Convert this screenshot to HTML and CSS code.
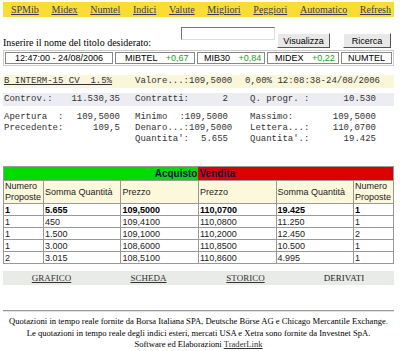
FILE: index.html
```html
<!DOCTYPE html>
<html lang="it">
<head>
    <meta charset="UTF-8">
    <title>Book - B INTERM-15 CV 1.5%</title>
    <link rel="stylesheet" href="styles.css">
</head>
<body>
    <div class="pagina">
        <div class="menu">
            <a href="#">SPMib</a>
            <a href="#">Midex</a>
            <a href="#">Numtel</a>
            <a href="#">Indici</a>
            <a href="#">Valute</a>
            <a href="#">Migliori</a>
            <a href="#">Peggiori</a>
            <a href="#">Automatico</a>
            <a href="#">Refresh</a>
        </div>

        <form class="cerca" onsubmit="return false">
            <span class="etichetta">Inserire il nome del titolo desiderato:</span>
            <input type="text" class="campo">
            <button class="bottone visualizza">Visualizza</button>
            <button class="bottone ricerca">Ricerca</button>
        </form>

        <div class="indici">
            <div class="cella ora">12:47:00 - 24/08/2006</div>
            <div class="cella mibtel">MIBTEL <span class="var">+0,67</span></div>
            <div class="cella mib30">MIB30 <span class="var">+0,84</span></div>
            <div class="cella midex">MIDEX <span class="var">+0,22</span></div>
            <div class="cella numtel">NUMTEL</div>
        </div>

        <div class="scheda">
            <div class="riga titolo">
                <a href="#" class="nome">B INTERM-15 CV  1.5%</a>
                <span class="valore">Valore...:109,5000</span>
                <span class="ultimo">0,00% 12:08:38-24/08/2006</span>
            </div>
            <div class="riga controv">
                <div class="dato c1"><span>Controv.:</span><span>11.530,35</span></div>
                <div class="dato c2"><span>Contratti:</span><span>2</span></div>
                <div class="dato c3"><span>Q. progr. :</span><span>10.530</span></div>
            </div>
            <div class="dettagli">
                <div class="dato c1"><span>Apertura  :</span><span>109,5000</span></div>
                <div class="dato c2"><span>Minimo</span><span>:109,5000</span></div>
                <div class="dato c3"><span>Massimo:</span><span>109,5000</span></div>
                <div class="dato c1"><span>Precedente:</span><span>109,5</span></div>
                <div class="dato c2"><span>Denaro...:</span><span>109,5000</span></div>
                <div class="dato c3"><span>Lettera...:</span><span>110,0700</span></div>
                <div class="dato c1"></div>
                <div class="dato c2"><span>Quantita':</span><span>5.655</span></div>
                <div class="dato c3"><span>Quantita'.:</span><span>19.425</span></div>
            </div>
        </div>

        <table class="book">
            <tr class="lati">
                <td colspan="3" class="acquisto">Acquisto</td>
                <td colspan="3" class="vendita">Vendita</td>
            </tr>
            <tr class="intestazione">
                <td class="w-num">Numero Proposte</td>
                <td class="w-qta">Somma Quantità</td>
                <td class="w-prz">Prezzo</td>
                <td class="w-prz">Prezzo</td>
                <td class="w-qta">Somma Quantità</td>
                <td class="w-num">Numero Proposte</td>
            </tr>
            <tr class="migliore">
                <td>1</td><td>5.655</td><td>109,5000</td>
                <td>110,0700</td><td>19.425</td><td>1</td>
            </tr>
            <tr>
                <td>1</td><td>450</td><td>109,4100</td>
                <td>110,0800</td><td>11.250</td><td>1</td>
            </tr>
            <tr>
                <td>1</td><td>1.500</td><td>109,1000</td>
                <td>110,2000</td><td>12.450</td><td>2</td>
            </tr>
            <tr>
                <td>1</td><td>3.000</td><td>108,6000</td>
                <td>110,8500</td><td>10.500</td><td>1</td>
            </tr>
            <tr>
                <td>2</td><td>3.015</td><td>108,5100</td>
                <td>110,8600</td><td>4.995</td><td>1</td>
            </tr>
        </table>

        <div class="collegamenti">
            <a href="#">GRAFICO</a>
            <a href="#">SCHEDA</a>
            <a href="#">STORICO</a>
            <span>DERIVATI</span>
        </div>

        <hr class="separatore">

        <p class="fonti">
            Quotazioni in tempo reale fornite da Borsa Italiana SPA, Deutsche Börse AG e Chicago Mercantile Exchange.<br>
            Le quotazioni in tempo reale degli indici esteri, mercati USA e Xetra sono fornite da Investnet SpA.<br>
            Software ed Elaborazioni <a href="#">TraderLink</a>
        </p>
    </div>
</body>
</html>
```

FILE: styles.css
```css
body {
    margin: 0;
    background: #fff;
    font-family: "Liberation Serif", serif;
    color: #000;
}
.pagina {
    width: 391px;
    margin: 0 0 0 3px;
    padding-top: 2px;
}

/* menu in alto */
.menu {
    background: #fcdc34;
    height: 15px;
    display: flex;
    justify-content: space-between;
    align-items: center;
    padding: 0 3px 0 8px;
    font-size: 10px;
}
.menu a {
    color: #3a3a60;
}

/* ricerca titolo */
.cerca {
    display: flex;
    align-items: flex-start;
    height: 33px;
    font-size: 10px;
}
.etichetta {
    margin-top: 20px;
    width: 178px;
    line-height: 12px;
}
.campo {
    margin-top: 10px;
    width: 94px;
    height: 13px;
    box-sizing: border-box;
    border: 1px solid #777;
    border-right-color: #ddd;
    border-bottom-color: #ddd;
    padding: 0;
}
.bottone {
    margin-top: 16px;
    height: 15px;
    padding: 0 4px;
    font-family: "Liberation Sans", sans-serif;
    font-size: 9px;
    background: #e8e8e8;
    border: 1px solid;
    border-color: #fff #555 #555 #fff;
    box-sizing: border-box;
}
.visualizza {
    margin-left: 2px;
    width: 53px;
}
.ricerca {
    margin-left: 13px;
    width: 48px;
}

/* riga indici */
.indici {
    display: flex;
    gap: 2px;
    border: 1px solid #ccc;
    padding: 1px;
    font-family: "Liberation Sans", sans-serif;
    font-size: 9px;
    white-space: nowrap;
}
.indici .cella {
    border: 1px solid #888;
    height: 12px;
    line-height: 10px;
    padding: 0 0 0 7px;
    box-sizing: border-box;
}
.indici .ora {
    width: 108px;
    padding: 0;
    text-align: center;
}
.indici .mibtel { width: 80px; padding-left: 9px; }
.indici .mib30 { width: 68px; padding-left: 6px; }
.indici .midex { width: 72px; }
.indici .numtel { flex: 1; padding-left: 6px; }
.indici .var {
    color: #17a017;
    margin-left: 6px;
}

/* scheda titolo */
.scheda {
    margin-top: 9px;
    font-family: "Liberation Mono", monospace;
    font-size: 9px;
    color: #333;
}
.scheda span,
.scheda a {
    white-space: pre;
}
.riga {
    height: 13px;
    line-height: 13px;
    display: flex;
    padding-left: 1px;
}
.titolo {
    background: #faf6da;
}
.titolo .nome {
    color: #333;
    width: 131px;
}
.titolo .valore {
    width: 110px;
}
.controv {
    margin-top: 5px;
    background: #ececf3;
}
.dettagli {
    margin-top: 6px;
    padding-left: 1px;
    display: grid;
    grid-template-columns: 131px 115px 126px;
    grid-auto-rows: 11px;
    line-height: 11px;
}
.dato {
    display: flex;
    justify-content: space-between;
}
.riga .c1 { width: 131px; }
.riga .c2 { width: 115px; }
.riga .c3 { width: 126px; }
.c1 { padding-right: 15px; }
.c2 { padding-right: 22px; }
.c1, .c2 { box-sizing: border-box; }

/* book di negoziazione */
.book {
    margin-top: 21px;
    width: 391px;
    border-collapse: collapse;
    border: 1px solid #999;
    font-family: "Liberation Sans", sans-serif;
    font-size: 9px;
    color: #222;
}
.book td {
    border: 1px solid #999;
    padding: 0 1px;
    height: 11px;
    line-height: 10px;
}
.book .lati td {
    height: 13px;
    font-size: 10px;
    font-weight: bold;
    color: #101050;
    border: none;
}
.book .acquisto {
    background: #00dc00;
    text-align: right;
}
.book .vendita {
    background: #dc0000;
    color: #3a0a50;
}
.intestazione td {
    background: #fcf8dc;
    height: 22px;
    line-height: 11px;
}
.w-num { width: 37px; }
.w-qta { width: 76px; }
.w-prz { width: 76px; }
.migliore td {
    font-weight: bold;
    color: #000;
}

/* collegamenti in basso */
.collegamenti {
    margin-top: 7px;
    background: #e8ebe8;
    height: 14px;
    display: grid;
    grid-template-columns: 97px 97px 97px 100px;
    align-items: center;
    justify-items: center;
    font-size: 9px;
}
.collegamenti a {
    color: #333;
}
.collegamenti span {
    color: #222;
}

.separatore {
    margin: 25px 0 0;
    border: none;
    border-top: 1px solid #999;
    border-bottom: 1px solid #e4e4e4;
}

.fonti {
    margin: 4px 0 0;
    text-align: center;
    font-size: 8.6px;
    line-height: 11.5px;
    white-space: nowrap;
}
.fonti a {
    color: #333;
}
```
